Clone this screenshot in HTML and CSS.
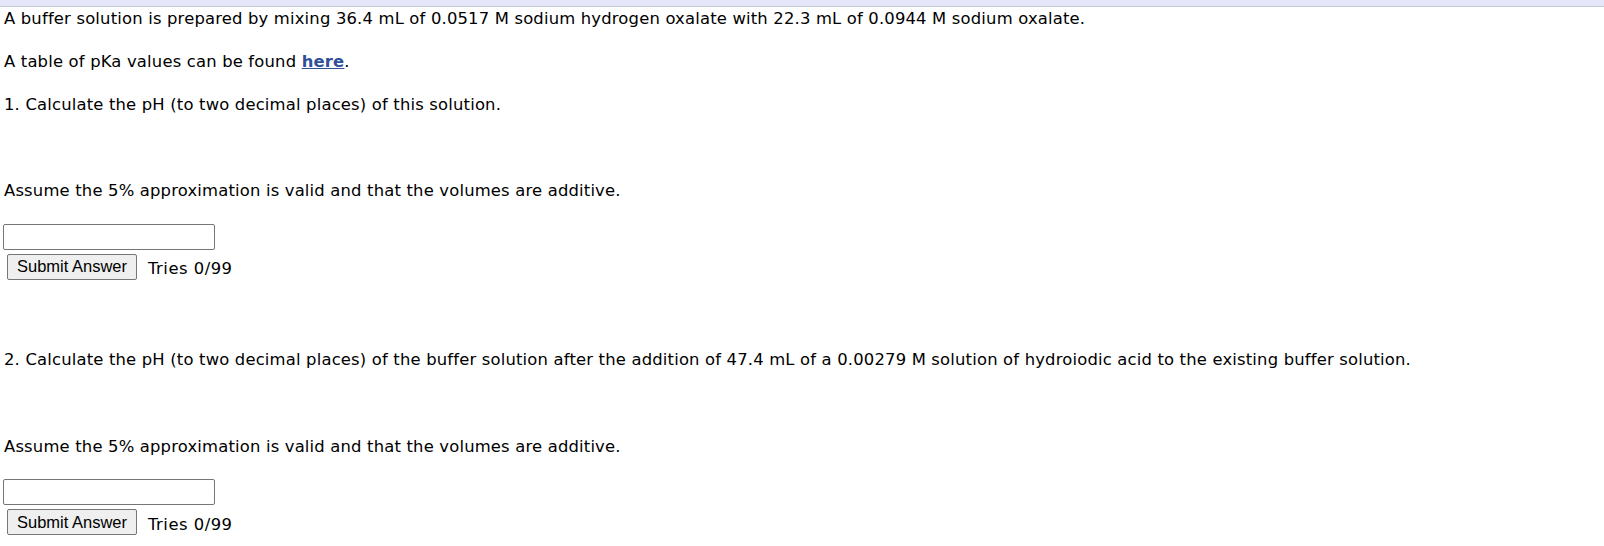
FILE: index.html
```html
<!DOCTYPE html>
<html>
<head>
<meta charset="utf-8">
<link rel="stylesheet" href="styles.css">
</head>
<body>
<div class="topbar"></div>
<div class="content">
  <div class="line">A buffer solution is prepared by mixing 36.4 mL of 0.0517 M sodium hydrogen oxalate with 22.3 mL of 0.0944 M sodium oxalate.</div>
  <div class="line gap1">A table of pKa values can be found <a class="link" href="#">here</a>.</div>
  <div class="line gap1">1. Calculate the pH (to two decimal places) of this solution.</div>
  <div class="line gap3">Assume the 5% approximation is valid and that the volumes are additive.</div>
  <div class="answer">
    <input class="field" type="text">
    <div class="submit-row">
      <button class="submit">Submit Answer</button>
      <span class="tries">Tries 0/99</span>
    </div>
  </div>
  <div class="line part2">2. Calculate the pH (to two decimal places) of the buffer solution after the addition of 47.4 mL of a 0.00279 M solution of hydroiodic acid to the existing buffer solution.</div>
  <div class="line gap3b">Assume the 5% approximation is valid and that the volumes are additive.</div>
  <div class="answer">
    <input class="field" type="text">
    <div class="submit-row">
      <button class="submit">Submit Answer</button>
      <span class="tries">Tries 0/99</span>
    </div>
  </div>
</div>
</body>
</html>
```
FILE: styles.css
```css
html, body {
  margin: 0;
  padding: 0;
  background: #ffffff;
}
body {
  font-family: "DejaVu Sans", Verdana, sans-serif;
  font-size: 16.4px;
  letter-spacing: 0.18px;
  line-height: 21.5px;
  color: #000000;
}
.topbar {
  height: 6px;
  background: #e6e6fa;
  border-bottom: 1px solid #c6c6d4;
}
.content {
  padding: 1px 0 0 4px;
}
.line {
  white-space: nowrap;
}
.gap1 {
  margin-top: 21.5px;
}
.gap3 {
  margin-top: 64.5px;
}
.gap3b {
  margin-top: 65.5px;
}
.link {
  color: #30509a;
  font-weight: bold;
  text-decoration: underline;
}
.answer {
  margin-top: 22px;
  margin-left: -1px;
}
.field {
  display: block;
  box-sizing: border-box;
  width: 212px;
  height: 26px;
  margin: 0;
  border: 1px solid #767676;
  border-radius: 2px;
  background: #ffffff;
  padding: 1px 2px;
}
.submit-row {
  display: flex;
  align-items: center;
  margin-top: 4px;
  margin-left: 4px;
  height: 26px;
}
.submit {
  box-sizing: border-box;
  height: 26px;
  width: 130px;
  margin: 0;
  padding: 0 6px;
  font-family: "Liberation Sans", Arial, sans-serif;
  font-size: 16.5px;
  letter-spacing: 0;
  color: #000000;
  background: #efefef;
  border: 1px solid #767676;
  border-radius: 2px;
}
.tries {
  margin-left: 11px;
  padding-top: 5px;
  letter-spacing: 0.5px;
}
.part2 {
  margin-top: 69px;
}
```
